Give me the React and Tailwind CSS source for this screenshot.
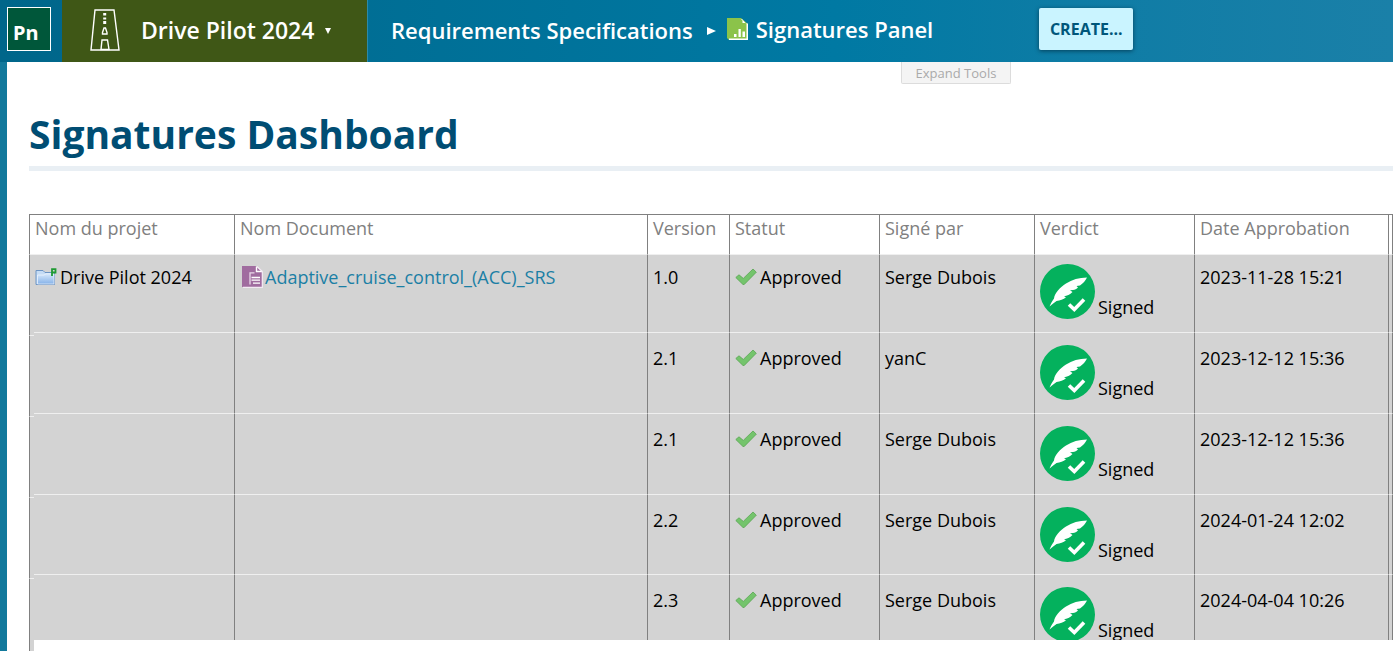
const rows = [
  { project: 'Drive Pilot 2024', doc: 'Adaptive_cruise_control_(ACC)_SRS', version: '1.0', signer: 'Serge Dubois', date: '2023-11-28 15:21' },
  { version: '2.1', signer: 'yanC', date: '2023-12-12 15:36' },
  { version: '2.1', signer: 'Serge Dubois', date: '2023-12-12 15:36' },
  { version: '2.2', signer: 'Serge Dubois', date: '2024-01-24 12:02' },
  { version: '2.3', signer: 'Serge Dubois', date: '2024-04-04 10:26' },
]

const columns = ['Nom Document', 'Version', 'Statut', 'Signé par', 'Verdict', 'Date Approbation']

function RoadIcon() {
  return (
    <svg width="30" height="42" viewBox="0 0 30 42" fill="none" stroke="#fff" strokeWidth="1.4" className="-mt-0.5" aria-hidden="true">
      <path d="M5 1H24L29 41H1Z" />
      <path d="M12.5 23.5L14 19H15.5L17 23.5V25H12.5Z" />
      <path d="M12 31H17.5L19 40.5H11Z" />
      <path d="M13.2 4H16.2V6.5H13.2ZM13.2 8.5H16.2V10.5H13.2ZM13.2 12H16.2V15H13.2Z" fill="#fff" stroke="none" />
    </svg>
  )
}

function ReportIcon() {
  return (
    <svg width="21" height="22" viewBox="0 0 21 22" aria-hidden="true">
      <path d="M0 0H14L21 6V22H2L0 20Z" fill="#8bc34a" />
      <path d="M14 1L15.5 2.5V5H19.5V20.5H2V22H21V5.5H19L15 1Z" fill="#fff" />
      <path d="M7 16H9.5V19H7ZM11.5 11H13.8V19H11.5ZM15.5 13.5H18V19H15.5Z" fill="#fff" />
    </svg>
  )
}

function ProjectIcon() {
  return (
    <svg width="22" height="18" viewBox="0 0 22 18" className="shrink-0" aria-hidden="true">
      <defs>
        <linearGradient id="folder" x1="0" y1="0" x2="0" y2="1">
          <stop offset="0" stopColor="#d6e8fb" />
          <stop offset="1" stopColor="#86b2e8" />
        </linearGradient>
      </defs>
      <path d="M1 2.5H8L10 4.5H19.5V16.5H1Z" fill="#c5dcf5" stroke="#6c94c4" />
      <path d="M2.5 7H9L11 5.8H19V16H2.5Z" fill="url(#folder)" stroke="#f0f7ff" strokeWidth=".7" />
      <path d="M17 8V1.2H20.5V4.5H17" fill="none" stroke="#1f9a33" strokeWidth="1.8" />
    </svg>
  )
}

function DocumentIcon() {
  return (
    <svg width="21" height="22" viewBox="0 0 21 22" className="shrink-0" aria-hidden="true">
      <path d="M0 0H14L20 6V21H0Z" fill="#a06c9f" />
      <path d="M14.5 .5V5.5H20" fill="none" stroke="#fff" strokeWidth="1.4" />
      <path d="M15 .5L20.3 5.5V21.3H1" fill="none" stroke="#f3e9f3" strokeWidth="1.2" />
      <path d="M12.5 6.8H8V18.5" fill="none" stroke="#ead9ea" strokeWidth="1.3" />
      <path d="M9.5 11.5H18M9.5 14.2H18M11 17.2H18" stroke="#fff" strokeWidth="1.3" />
    </svg>
  )
}

function ApprovedIcon() {
  return (
    <svg width="22" height="18" viewBox="0 0 22 18" className="shrink-0" aria-hidden="true">
      <path d="M0.8 9.5L4 6.8L8.3 10.4L18 1L21.3 4.2L9.2 16.5H8Z" fill="#74c46c" stroke="#59a653" strokeWidth=".8" strokeLinejoin="round" />
    </svg>
  )
}

function SignedIcon() {
  return (
    <svg width="55" height="55" viewBox="0 0 55 55" className="shrink-0" aria-hidden="true">
      <circle cx="27.5" cy="27.5" r="27.5" fill="#04b15d" />
      <path d="M9.5 42.5C11 39 12 37.5 14 34.5C14.5 29 20 23.5 26 19.5C32 15.5 39 13.8 47 13.5C45.5 16.5 43 19.5 40 21.5L36.5 22L38 23.5C36.5 25 35 25.7 33 26L30 26.3L32.5 28C30 30.5 27 32 24 32.3L26 33.3C23.5 35.5 20 36.5 16.5 37C14.5 38.5 12 40.5 9.5 42.5Z" fill="#fff" />
      <path d="M29 40.5L34.3 45.5L44 35.5" fill="none" stroke="#fff" strokeWidth="3.6" />
    </svg>
  )
}

function Header() {
  return (
    <header className="flex h-[62px] shrink-0 items-stretch bg-linear-to-r from-[#00668a] via-[#0079a3] via-60% to-[#1a80a8] font-semibold text-white">
      <a href="#home" className="flex w-[62px] shrink-0 items-center pb-1 pl-[7px]">
        <span className="flex h-11 w-11 items-end border border-white bg-[#00573a] pb-[5px] pl-[5px] font-['Noto_Sans',sans-serif] text-xl leading-6 font-bold">Pn</span>
      </a>
      <button className="flex w-[306px] shrink-0 items-center border-r border-[#2c8aa8] bg-[#3f5716] pl-7 whitespace-nowrap">
        <RoadIcon />
        <span className="ml-[21px] pb-0.5 text-[23px]">Drive Pilot 2024</span>
        <svg width="6" height="6" viewBox="0 0 6 6" className="ml-[11px]" aria-hidden="true"><path d="M0 0H6L3 6Z" fill="#fff" /></svg>
      </button>
      <nav className="flex items-center pl-[23px] text-[22px] whitespace-nowrap">
        <a href="#specifications" className="pb-0.5">Requirements Specifications</a>
        <svg width="9" height="8" viewBox="0 0 9 8" className="ml-3.5" aria-hidden="true"><path d="M0 0L9 4L0 8Z" fill="#fff" /></svg>
        <a href="#signatures" className="ml-[11px] flex items-center gap-2 pb-1">
          <ReportIcon />
          Signatures Panel
        </a>
      </nav>
      <button className="mt-2 ml-[106px] h-[42px] w-[94px] shrink-0 rounded-xs bg-[#caf4ff] text-base font-bold text-[#00567a] shadow-[0_1px_4px_rgba(0,40,60,0.7)]">CREATE...</button>
    </header>
  )
}

function SignaturesTable() {
  return (
    <div className="flex min-h-0 flex-1">
      <div className="flex w-[5px] shrink-0 flex-col">
        <div className="h-10 shrink-0 border-t border-l border-[#808080]" />
        {rows.map((row, i) => (
          <div key={i} className="h-[81px] shrink-0 border-t border-t-[#efefef] border-l border-l-[#808080] bg-[#d3d3d3]" />
        ))}
      </div>
      <div className="mb-[11px] min-w-0 flex-1 overflow-hidden">
        <table className="w-full table-fixed border-separate border-spacing-0 text-left text-lg leading-6 whitespace-nowrap text-black">
          <colgroup>
            <col className="w-[201px]" />
            <col className="w-[413px]" />
            <col className="w-[82px]" />
            <col className="w-[150px]" />
            <col className="w-[155px]" />
            <col className="w-[160px]" />
            <col className="w-[194px]" />
            <col />
          </colgroup>
          <thead>
            <tr className="h-10 align-top text-[#808080] *:border-t *:border-r *:border-[#808080] *:pt-px *:font-normal">
              <th className="pl-px">Nom du projet</th>
              {columns.map(name => <th key={name} className="pl-[5px]">{name}</th>)}
              <th />
            </tr>
          </thead>
          <tbody>
            {rows.map((row, i) => (
              <tr key={i} className={`align-top *:border-t *:border-r *:border-t-[#efefef] *:border-r-[#808080] *:bg-[#d3d3d3] ${i === 0 ? 'h-[78px] *:pt-[9px]' : i === 3 ? 'h-20 *:pt-3' : 'h-[81px] *:pt-3'}`}>
                <td className="pl-px">
                  {row.project && <div className="flex items-center gap-[3px] pt-px"><ProjectIcon />{row.project}</div>}
                </td>
                <td className="pl-[7px]">
                  {row.doc && <a href="#document" className="flex items-center gap-0.5 pt-px text-[#1b7fa5]"><DocumentIcon />{row.doc}</a>}
                </td>
                <td className="pl-[5px]"><div className="pt-px">{row.version}</div></td>
                <td className="pl-[5px]"><div className="flex items-center gap-[3px] pt-px"><ApprovedIcon />Approved</div></td>
                <td className="pl-[5px]"><div className="pt-px">{row.signer}</div></td>
                <td className="pl-[5px]"><div className="flex items-end gap-[3px]"><SignedIcon />Signed</div></td>
                <td className="pl-[5px]"><div className="pt-px">{row.date}</div></td>
                <td />
              </tr>
            ))}
          </tbody>
        </table>
      </div>
    </div>
  )
}

export default function App() {
  return (
    <div className="flex h-screen flex-col overflow-hidden bg-white font-['Open_Sans','Noto_Sans',sans-serif]">
      <Header />
      <main className="relative flex min-h-0 flex-1 flex-col border-l-[7px] border-[#12799c] pl-[22px]">
        <button className="absolute top-0 left-[894px] h-[22px] w-[110px] rounded-b-xs border border-t-0 border-[#dcdcdc] bg-[#f4f4f4] text-[13px] leading-5 text-[#aaa]">Expand Tools</button>
        <h1 className="mb-[43px] border-b-[5px] border-[#e9eff4] pt-[46px] pb-1.5 text-[39px] leading-[52px] font-bold text-[#004d73]">Signatures Dashboard</h1>
        <SignaturesTable />
      </main>
    </div>
  )
}
